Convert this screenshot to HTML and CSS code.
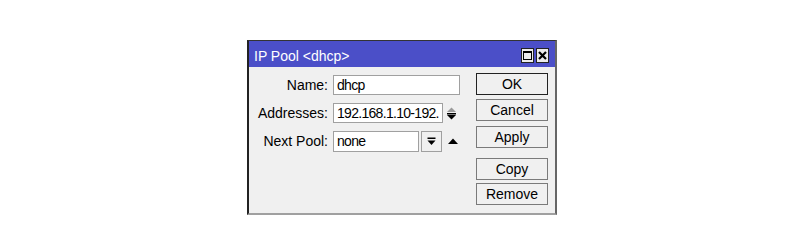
FILE: index.html
```html
<!DOCTYPE html>
<html>
<head>
    <title>IP Pool &lt;dhcp&gt;</title>
    <link rel="stylesheet" href="styles.css">
</head>
<body>
    <div class="window">
        <div class="titlebar">
            <span class="title">IP Pool &lt;dhcp&gt;</span>
            <div class="title-buttons">
                <span class="tb-btn">
                    <svg width="11" height="11" viewBox="0 0 11 11"><rect x="1.5" y="1.5" width="8" height="8" fill="none" stroke="#000" stroke-width="1"/><rect x="1" y="1" width="9" height="2" fill="#000"/></svg>
                </span>
                <span class="tb-btn">
                    <svg width="11" height="11" viewBox="0 0 11 11"><path d="M2 2 L9 9 M9 2 L2 9" stroke="#000" stroke-width="2.2"/></svg>
                </span>
            </div>
        </div>

        <div class="content">
            <div class="form">
                <label class="field-label" for="name">Name:</label>
                <div class="field">
                    <input type="text" id="name" class="input input-name" value="dhcp">
                </div>

                <label class="field-label" for="addresses">Addresses:</label>
                <div class="field">
                    <input type="text" id="addresses" class="input input-addr" value="192.168.1.10-192.168.1.254">
                    <svg class="spin" width="11" height="14" viewBox="0 0 11 14">
                        <path d="M1 6 L5.5 1.5 L10 6 Z" fill="#9a9a9a"/>
                        <rect x="1" y="7" width="9" height="1.5" fill="#000"/>
                        <path d="M1 9 L10 9 L5.5 13.5 Z" fill="#000"/>
                    </svg>
                </div>

                <label class="field-label" for="nextPool">Next Pool:</label>
                <div class="field">
                    <input type="text" id="nextPool" class="input input-next" value="none">
                    <span class="drop-btn">
                        <svg width="9" height="9" viewBox="0 0 9 9"><rect x="0.5" y="0.5" width="8" height="1.5" fill="#000"/><path d="M0.5 3.5 L8.5 3.5 L4.5 8 Z" fill="#000"/></svg>
                    </span>
                    <svg class="up-arrow" width="10" height="6" viewBox="0 0 10 6"><path d="M0 6 L5 0.5 L10 6 Z" fill="#000"/></svg>
                </div>
            </div>

            <div class="buttons">
                <button class="btn btn-default">OK</button>
                <button class="btn btn-cancel">Cancel</button>
                <button class="btn btn-apply">Apply</button>
                <button class="btn btn-copy">Copy</button>
                <button class="btn">Remove</button>
            </div>
        </div>
    </div>
</body>
</html>
```

FILE: styles.css
```css
body {
    margin: 0;
    background: #ffffff;
    font-family: "Liberation Sans", Arial, sans-serif;
    font-size: 14px;
    color: #000;
}
.window {
    box-sizing: border-box;
    width: 310px;
    height: 175px;
    margin: 40px 0 0 247px;
    background: #f0f0f0;
    border-top: 1px solid #333;
    border-left: 2px solid #222;
    border-right: 2px solid #666;
    border-bottom: 2px solid #a0a0a0;
    display: flex;
    flex-direction: column;
}
.titlebar {
    height: 26px;
    background: #4b4fc8;
    color: #fff;
    display: flex;
    align-items: center;
    justify-content: space-between;
    padding: 0 6px 0 5px;
}
.title {
    font-size: 14px;
    padding-top: 3px;
}
.title-buttons {
    display: flex;
    gap: 2px;
    padding-top: 2px;
}
.tb-btn {
    box-sizing: border-box;
    width: 13px;
    height: 15px;
    border: 1px solid #222;
    background: #ececec;
    display: flex;
    align-items: center;
    justify-content: center;
}
.content {
    display: flex;
    justify-content: space-between;
    padding: 6px 7px 0 0;
}
.form {
    display: grid;
    grid-template-columns: 79px auto;
    column-gap: 5px;
    row-gap: 8px;
    align-items: center;
    padding-top: 2px;
    align-content: start;
}
.field-label {
    text-align: right;
    line-height: 20px;
}
.field {
    display: flex;
    align-items: center;
    height: 20px;
}
.input {
    box-sizing: border-box;
    height: 20px;
    border: 1px solid #a0a0a0;
    background: #fff;
    font-family: inherit;
    font-size: 14px;
    letter-spacing: -0.7px;
    padding: 0 3px;
    margin: 0;
    outline: none;
}
.input-name {
    width: 127px;
}
.input-addr {
    width: 110px;
}
.input-next {
    width: 86px;
    height: 21px;
}
.spin {
    margin-left: 3px;
}
.drop-btn {
    box-sizing: border-box;
    width: 21px;
    height: 21px;
    margin-left: 2px;
    border: 1px solid #a0a0a0;
    background: #f0f0f0;
    display: flex;
    align-items: center;
    justify-content: center;
}
.up-arrow {
    margin-left: 6px;
}
.buttons {
    display: flex;
    flex-direction: column;
    gap: 3px;
}
.btn {
    box-sizing: border-box;
    width: 72px;
    height: 22px;
    padding: 0;
    font-family: inherit;
    font-size: 14px;
    color: #000;
    background: #f0f0f0;
    border: 1px solid #7a7a7a;
    border-radius: 0;
}
.btn-default {
    border-color: #222;
}
.btn-cancel {
    margin-top: 1px;
}
.btn-apply {
    margin-top: 2px;
}
.btn-copy {
    margin-top: 7px;
}
```
